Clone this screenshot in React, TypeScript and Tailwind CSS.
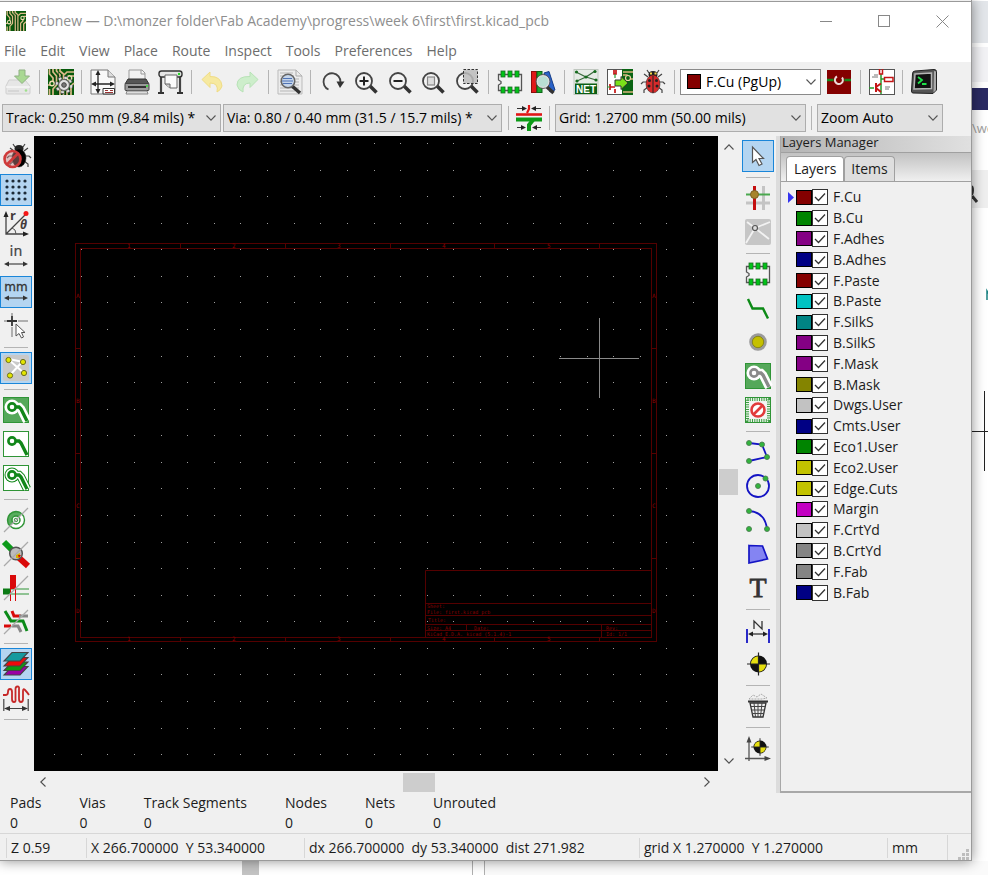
import type { ReactNode } from "react";

type Tool = { label: string; icon: ReactNode; active?: boolean } | null;

function Icon({ children }: { children: ReactNode }) {
  return (
    <svg
      width="26"
      height="26"
      viewBox="0 0 26 26"
      fill="none"
      className="shrink-0 overflow-visible"
      aria-hidden="true"
    >
      {children}
    </svg>
  );
}

function Chevron({ className = "" }: { className?: string }) {
  return (
    <svg
      width="10"
      height="10"
      viewBox="0 0 10 10"
      fill="none"
      stroke="currentColor"
      className={className}
      aria-hidden="true"
    >
      <path d="M0.5 2.5 5 7.2 9.5 2.5" strokeWidth="1.1" />
    </svg>
  );
}

/* ---------- shared drawings ---------- */

function PcbTracks() {
  return (
    <>
      <rect width="26" height="26" fill="#075a0b" />
      <g stroke="#dcb98a" strokeWidth="1.7">
        <path d="M1.5 0V5L5 9V13M5 0V3L8.500 7V16L5 20V26M8.500 0V2L12 6V26M12 0V2L15.500 5V26" />
        <path d="M0 16H2M1.500 26V20M26 3H19L16 6M19 26V16L22 13V10M23 26V17L26 14M26 7H23" />
      </g>
      <g stroke="#0c2f0d" strokeWidth="0.700">
        <path d="M3.300 0V4L6.700 8V15M10.300 3 10.300 26M13.700 5V26M17.300 26V8M21 26V16" />
      </g>
      <circle cx="4" cy="14.500" r="2.200" fill="#075a0b" stroke="#f0dcb4" strokeWidth="1.400" />
      <circle cx="21.500" cy="9" r="2.200" fill="#075a0b" stroke="#f0dcb4" strokeWidth="1.400" />
    </>
  );
}

function Lens({ children }: { children?: ReactNode }) {
  return (
    <>
      <path d="M17 17 23.5 23.5" stroke="#333" strokeWidth="3.6" />
      <circle cx="11" cy="12" r="8" fill="#f4f4f4" stroke="#444" strokeWidth="1.8" />
      {children}
    </>
  );
}

function Footprint() {
  return (
    <>
      <path
        d="M1.5 5.5H24.500V21.500H1.500V16L4 14.500V12.500L1.500 11Z"
        fill="#f4f4f4"
        stroke="#555"
        strokeWidth="1.3"
      />
      <g fill="#00c418" stroke="#1b6b22" strokeWidth="0.8">
        <rect x="4" y="2" width="4" height="6" />
        <rect x="11" y="2" width="4" height="6" />
        <rect x="18" y="2" width="4" height="6" />
        <rect x="4" y="18" width="4" height="6" />
        <rect x="11" y="18" width="4" height="6" />
        <rect x="18" y="18" width="4" height="6" />
      </g>
    </>
  );
}

function Zone({ filled, halo, track }: { filled: boolean; halo: boolean; track: string }) {
  const path = "M11 10H16L18 12 24 24";
  return (
    <>
      <rect
        x="0.5"
        y="0.5"
        width="25"
        height="25"
        fill={filled ? "#55a85a" : "#fff"}
        stroke="#2f9436"
      />
      {halo && (
        <>
          <path d={path} stroke={filled ? "#fff" : track} strokeWidth="8.500" />
          <circle cx="9" cy="10" r="7.500" fill={filled ? "#fff" : track} />
          <path d={path} stroke="#fff" strokeWidth="6.500" />
          <circle cx="9" cy="10" r="6.500" fill="#fff" />
        </>
      )}
      <path d={path} stroke={track} strokeWidth="3.400" />
      <circle cx="9" cy="10" r="3.600" fill="#fff" stroke={track} strokeWidth="2.600" />
    </>
  );
}

function Slash() {
  return <path d="M1 25 25 1" stroke="#aaa" strokeWidth="1.3" />;
}

function Target({ cx, cy, r }: { cx: number; cy: number; r: number }) {
  return (
    <g transform={`translate(${cx} ${cy}) scale(${r})`}>
      <circle r="1" fill="#111" />
      <path d="M0 0V-.9A.9 .9 0 0 0-.9 0ZM0 0V.9A.9 .9 0 0 0 .9 0Z" fill="#e6df10" />
      <path d="M-1.350 0H1.350M0-1.350V1.350" stroke="#222" strokeWidth="0.140" />
    </g>
  );
}

function DoubleArrow({ y }: { y: number }) {
  return (
    <>
      <path d={`M3 ${y}H23`} stroke="#444" strokeWidth="1.2" />
      <path
        d={`M1 ${y}L6 ${y - 2.5}V${y + 2.5}ZM25 ${y}L20 ${y - 2.5}V${y + 2.5}Z`}
        fill="#333"
      />
    </>
  );
}

function NodeDot({ x, y }: { x: number; y: number }) {
  return <circle cx={x} cy={y} r="2.500" fill="#31b53c" stroke="#4d7d52" strokeWidth="0.900" />;
}

function Bug({ body, x = 13 }: { body: string; x?: number }) {
  return (
    <g transform={`translate(${x - 13} 0)`}>
      <path
        d="M8 8 4 5M18 8 22 5M7 13H3L1 15M19 13H23L25 15M8 18 4 21V24M18 18 22 21V24M9 4 7 1M17 4 19 1"
        stroke="#444"
        strokeWidth="1.200"
      />
      <ellipse cx="13" cy="5.500" rx="4.500" ry="3.500" fill="#222" />
      <ellipse cx="13" cy="15" rx="7" ry="9" fill={body} stroke="#222" strokeWidth="0.500" />
    </g>
  );
}

/* ---------- toolbars ---------- */

const mainTools: Tool[] = [
  {
    label: "Save board",
    icon: (
      <Icon>
        <path d="M4 11H20L25 17V24Q25 25 24 25H2Q1 25 1 24V17Z" fill="#e6e6e6" stroke="#cfcfcf" />
        <path d="M1 18H25" stroke="#fff" />
        <path d="M3 22H14" stroke="#ccc" strokeWidth="1.200" />
        <circle cx="21" cy="21.500" r="1.300" fill="#9fe08c" />
        <path d="M14 1H20V7H24.500L17 14.500 9.500 7H14Z" fill="#a9d893" stroke="#8fb183" />
      </Icon>
    ),
  },
  null,
  {
    label: "Board setup",
    icon: (
      <Icon>
        <PcbTracks />
        <circle cx="16" cy="16" r="7.500" stroke="#555" strokeWidth="3.500" strokeDasharray="2.950 2.950" />
        <circle cx="16" cy="16" r="7.300" stroke="#ddd" strokeWidth="2" strokeDasharray="2.870 2.870" />
        <circle cx="16" cy="16" r="5.500" fill="#e2e2e2" stroke="#666" strokeWidth="1.200" />
        <circle cx="16" cy="16" r="2.300" fill="#777" stroke="#444" />
      </Icon>
    ),
  },
  null,
  {
    label: "Page settings",
    icon: (
      <Icon>
        <path d="M1 1H18L25 8V25H1Z" fill="#f8f8f8" stroke="#777" />
        <path d="M18 1V8H25" fill="#ddd" stroke="#777" />
        <path d="M8 3V23M3 15H23" stroke="#222" strokeWidth="1.300" />
        <path d="M8 1 5.500 6H10.500ZM8 25 5.500 20H10.500ZM1 15 6 12.500V17.500ZM25 15 20 12.500V17.500Z" fill="#222" />
        <path d="M13 19.500H24.500V25H13Z" fill="#fff" stroke="#333" />
        <path d="M15 21.500H18M20 21.500H23M15 23.500H23" stroke="#933" />
      </Icon>
    ),
  },
  {
    label: "Print board",
    icon: (
      <Icon>
        <path d="M6 1H18L21 4V13H5V1Z" fill="#f2f2f2" stroke="#999" />
        <path d="M17 1V5H21" stroke="#999" />
        <path d="M4 10 1 15H25L22 10Z" fill="#555" stroke="#333" />
        <rect x="1" y="14.500" width="24" height="7" rx="1" fill="#999" stroke="#444" />
        <rect x="4" y="17" width="18" height="2" fill="#333" />
        <circle cx="23" cy="17" r="1" fill="#35e835" />
        <path d="M3 22H23L24 25H2Z" fill="#ddd" stroke="#888" />
      </Icon>
    ),
  },
  {
    label: "Plot",
    icon: (
      <Icon>
        <path d="M3 8V23M22 8V23" stroke="#444" strokeWidth="2.200" />
        <path d="M0 24H6M19 24H25" stroke="#333" strokeWidth="2" />
        <rect x="1" y="2" width="23" height="6" rx="2.500" fill="#e6e6e6" stroke="#333" strokeWidth="1.400" />
        <circle cx="21" cy="5" r="1.200" fill="#25d425" />
        <path d="M7 6H19V19H12L7 15Z" fill="#fafafa" stroke="#666" />
        <path d="M7 15H12V19" fill="#ccc" stroke="#666" />
      </Icon>
    ),
  },
  null,
  {
    label: "Undo",
    icon: (
      <Icon>
        <path
          d="M2 10.500 10 3V7.500Q21 7 22 17Q21 21 17 23Q19 14 10 14V18.500Z"
          fill="#f6e9a0"
          stroke="#f0dc84"
          strokeLinejoin="round"
        />
      </Icon>
    ),
  },
  {
    label: "Redo",
    icon: (
      <Icon>
        <path
          d="M24 10.500 16 3V7.500Q3 7 3 16Q4 21 9 23Q8 14 16 14V18.500Z"
          fill="#cdeecb"
          stroke="#b7e2b6"
          strokeLinejoin="round"
        />
      </Icon>
    ),
  },
  null,
  {
    label: "Find",
    icon: (
      <Icon>
        <path d="M1 1H19L25 7V25H1Z" fill="#ececec" stroke="#bbb" />
        <path d="M19 1V7H25" stroke="#aaa" />
        <path d="M3 4H16M3 7H17M3 10H22M3 13H22M3 16H22M3 19H22M3 22H18" stroke="#b5b5b5" />
        <path d="M15 17 23 24" stroke="#333" strokeWidth="3.500" />
        <circle cx="11" cy="12" r="6.800" fill="#c5d5ea" stroke="#666" strokeWidth="1.500" />
        <path d="M6 9.500H15M5 12H16M6 14.500H15" stroke="#4f73b5" strokeWidth="1.100" />
      </Icon>
    ),
  },
  null,
  {
    label: "Refresh",
    icon: (
      <Icon>
        <path d="M9.500 20.500A8.500 8.500 0 1 1 21.500 13" stroke="#444" strokeWidth="1.800" />
        <path d="M17.500 12.500H25.500L21 19Z" fill="#333" />
      </Icon>
    ),
  },
  {
    label: "Zoom in",
    icon: (
      <Icon>
        <Lens>
          <path d="M11 7.500V16.500M6.500 12H15.500" stroke="#222" strokeWidth="2" />
        </Lens>
      </Icon>
    ),
  },
  {
    label: "Zoom out",
    icon: (
      <Icon>
        <Lens>
          <path d="M6.500 12H15.500" stroke="#222" strokeWidth="2" />
        </Lens>
      </Icon>
    ),
  },
  {
    label: "Zoom to fit",
    icon: (
      <Icon>
        <Lens>
          <rect x="7.500" y="8" width="7" height="8" fill="#ddd" stroke="#888" strokeWidth="1.200" />
        </Lens>
      </Icon>
    ),
  },
  {
    label: "Zoom to selection",
    icon: (
      <Icon>
        <Lens />
        <rect
          x="9.500"
          y="0.500"
          width="14"
          height="14"
          fill="#bbb"
          fillOpacity="0.850"
          stroke="#333"
          strokeDasharray="2.500 1.500"
        />
      </Icon>
    ),
  },
  null,
  {
    label: "Footprint editor",
    icon: (
      <Icon>
        <Footprint />
      </Icon>
    ),
  },
  {
    label: "Footprint viewer",
    icon: (
      <Icon>
        <rect x="1.500" y="2.500" width="5" height="21" fill="#e01818" stroke="#8d0c0c" />
        <rect x="7" y="2.500" width="5" height="21" fill="#19a82b" stroke="#0d6618" />
        <path d="M14 4 19 2.500 25 21 20 23Z" fill="#2a62c9" stroke="#153d88" />
        <path d="M17 18 23.500 24" stroke="#333" strokeWidth="3.500" />
        <circle cx="13" cy="12.500" r="6" fill="#b9dfd4" stroke="#ddd" strokeWidth="1.500" />
        <circle cx="13" cy="12.500" r="7" stroke="#555" strokeWidth="0.900" />
      </Icon>
    ),
  },
  null,
  {
    label: "Load netlist",
    icon: (
      <Icon>
        <rect x="1" y="0.500" width="24" height="25" fill="#e6ebe6" stroke="#bfc7bf" />
        <path d="M3 3 13 8 22 2M13 8 4 12M13 8 23 11" stroke="#3b6b3e" strokeWidth="1.200" />
        <g fill="#146b1c">
          <circle cx="3.500" cy="3" r="1.600" />
          <circle cx="22" cy="2.500" r="1.600" />
          <circle cx="13" cy="8" r="1.600" />
          <circle cx="4" cy="12" r="1.600" />
          <circle cx="23" cy="11" r="1.600" />
        </g>
        <rect x="2" y="14.500" width="22" height="10.500" fill="#0b5f14" />
        <text
          x="13"
          y="23.500"
          textAnchor="middle"
          fontSize="10"
          fontWeight="bold"
          fill="#fff"
          fontFamily="Liberation Sans, sans-serif"
        >
          NET
        </text>
      </Icon>
    ),
  },
  {
    label: "Update board from schematic",
    icon: (
      <Icon>
        <rect x="0.500" y="0.500" width="15" height="25" fill="#fff" stroke="#555" />
        <rect x="15" y="0" width="11" height="26" fill="#0a6413" />
        <path d="M16 3H26M16 6H20L23 10H26M16 23H26" stroke="#d8b27c" strokeWidth="1.400" />
        <circle cx="21" cy="9" r="2.500" fill="#0a6413" stroke="#ecd3a7" strokeWidth="1.200" />
        <path d="M7 1V5H9V1M3 15V21M3 18H8M8 20V24" stroke="#c41616" strokeWidth="1.700" />
        <path d="M8 5V9M0 18H3" stroke="#2b9a33" strokeWidth="1.200" />
        <path d="M8 11H14V7.500L21 14 14 20.500V17H8Z" fill="#7be019" stroke="#333" />
      </Icon>
    ),
  },
  {
    label: "Design rules check",
    icon: (
      <Icon>
        <Bug body="#d62a2a" />
        <path d="M13 7V24" stroke="#222" />
        <g fill="#222">
          <circle cx="9.500" cy="11.500" r="1.500" />
          <circle cx="16.500" cy="11.500" r="1.500" />
          <circle cx="9" cy="17" r="1.500" />
          <circle cx="17" cy="17" r="1.500" />
        </g>
        <path d="M10 4.500H12M14.500 4.500H16.500" stroke="#f4d648" strokeWidth="1.800" />
      </Icon>
    ),
  },
  null,
];

const sideTools: Tool[] = [
  {
    label: "Layer pair",
    icon: (
      <Icon>
        <rect x="1" y="1" width="24" height="24" fill="#840000" />
        <path d="M1 11H25" stroke="#158a1d" strokeWidth="2.500" />
        <circle cx="13" cy="11" r="5.500" fill="#840000" />
        <path d="M11 7.500A4 4 0 1 0 16 8.500" stroke="#eed8d8" strokeWidth="2" />
      </Icon>
    ),
  },
  null,
  {
    label: "Open schematic",
    icon: (
      <Icon>
        <rect x="0.500" y="0.500" width="25" height="25" fill="#fff" stroke="#555" />
        <path d="M12 5V25M0 19H5M12 10H15" stroke="#249a2b" strokeWidth="1.500" />
        <path d="M10.500 0V5H13.500V0M15.500 8.500H24V12.500H15.500Z" stroke="#c41616" strokeWidth="1.500" />
        <path d="M7 14V23M7 18 12 14.500M7 19 12 23" stroke="#c41616" strokeWidth="2" />
        <path d="M3 8H9M5 6H9M16 18H21M16 20H20" stroke="#777" />
      </Icon>
    ),
  },
  null,
  {
    label: "Scripting console",
    icon: (
      <Icon>
        <path d="M4 2 23 0.500Q25.500 0.500 25.500 2.500V21L22 24.500 2 24Q0.500 24 0.500 22L1.500 5Q1.500 2 4 2Z" fill="#555" stroke="#222" />
        <path d="M23 2 25 2.500V21L22.500 23.500Z" fill="#aaa" />
        <path d="M4 5 20.500 4V19.500L3 20Z" fill="#111" stroke="#b5b5b5" strokeWidth="1.500" />
        <path d="M7 8 11 11 7 14.500M11 15H15.500" stroke="#20e04a" strokeWidth="1.800" />
      </Icon>
    ),
  },
];

const leftTools: Tool[] = [
  {
    label: "Disable design rule checking",
    icon: (
      <Icon>
        <Bug body="#000" x={16} />
        <circle cx="9.500" cy="16" r="8" fill="#c88" fillOpacity="0.450" stroke="#cf3a3a" strokeWidth="2.600" />
        <path d="M4 21.500 15 10.500" stroke="#cf3a3a" strokeWidth="2.600" />
      </Icon>
    ),
  },
  {
    label: "Show grid",
    active: true,
    icon: (
      <Icon>
        {[4, 10, 16, 22].map((y) =>
          [4, 10, 16, 22].map((x) => (
            <circle key={`${x}-${y}`} cx={x} cy={y} r="1.600" fill="#1d2b38" />
          )),
        )}
      </Icon>
    ),
  },
  {
    label: "Polar coordinates",
    icon: (
      <Icon>
        <path d="M3 3V23H23M3 23 23 3" stroke="#444" strokeWidth="1.300" />
        <path d="M3 0 0.500 6H5.500ZM26 23 20 20.500V25.500ZM" fill="#222" />
        <path d="M9 17Q13 18 13 23" stroke="#555" />
        <circle cx="23" cy="2.500" r="2.500" fill="#f41818" />
        <text x="7" y="9" fontSize="13" fontWeight="bold" fill="#443b3b" fontFamily="Open Sans, sans-serif">
          r
        </text>
        <text x="17" y="18" fontSize="12" fontStyle="italic" fontWeight="bold" fill="#443b3b" fontFamily="Open Sans, sans-serif">
          θ
        </text>
      </Icon>
    ),
  },
  {
    label: "Inches",
    icon: (
      <Icon>
        <text x="13" y="11" textAnchor="middle" fontSize="14" fill="#444" stroke="#444" strokeWidth="0.200" fontFamily="DejaVu Sans, sans-serif">
          in
        </text>
        <DoubleArrow y={19} />
      </Icon>
    ),
  },
  {
    label: "Millimeters",
    active: true,
    icon: (
      <Icon>
        <text x="13" y="12" textAnchor="middle" fontSize="12" fill="#333" stroke="#333" strokeWidth="0.300" fontFamily="DejaVu Sans, sans-serif">
          mm
        </text>
        <DoubleArrow y={19} />
      </Icon>
    ),
  },
  {
    label: "Full window cursor",
    icon: (
      <Icon>
        <path d="M9 0V3M9 14V24M1 8H4M15 8H25" stroke="#999" strokeWidth="1.500" />
        <path d="M9 3V13M4 8H14" stroke="#333" strokeWidth="1.800" />
        <path d="M13 11V23L16 20.500 18.500 25 20.500 24 18.500 19.500H22Z" fill="#fff" stroke="#555" />
      </Icon>
    ),
  },
  null,
  {
    label: "Show ratsnest",
    active: true,
    icon: (
      <Icon>
        <rect width="26" height="26" rx="2" fill="#c9c9c9" />
        <path d="M6 4 20 7M6 5 21 18M20 6 7 20" stroke="#fff" strokeWidth="2" />
        <g fill="#e3e600" stroke="#6d6e1d">
          <circle cx="5.500" cy="5" r="2.600" />
          <circle cx="20" cy="7" r="2.600" />
          <circle cx="21" cy="18" r="2.600" />
          <circle cx="7" cy="20.500" r="2.600" />
        </g>
      </Icon>
    ),
  },
  null,
  {
    label: "Show filled zones",
    icon: (
      <Icon>
        <Zone filled halo track="#12871a" />
      </Icon>
    ),
  },
  {
    label: "Hide zones",
    icon: (
      <Icon>
        <Zone filled={false} halo={false} track="#12871a" />
      </Icon>
    ),
  },
  {
    label: "Show zone outlines",
    icon: (
      <Icon>
        <Zone filled={false} halo track="#12871a" />
      </Icon>
    ),
  },
  null,
  {
    label: "Sketch pads",
    icon: (
      <Icon>
        <circle cx="13" cy="13" r="8.500" fill="#fff" stroke="#2f9436" strokeWidth="1.400" />
        <path d="M7 19A8.500 8.500 0 0 1 19 7Z" fill="#58ad5e" stroke="#2f9436" />
        <circle cx="13" cy="13" r="4" fill="#fff" stroke="#2f9436" strokeWidth="1.500" />
        <circle cx="13" cy="13" r="1.800" stroke="#2f9436" />
        <Slash />
      </Icon>
    ),
  },
  {
    label: "Sketch vias",
    icon: (
      <Icon>
        <path d="M1 1 10 10" stroke="#0c9a1a" strokeWidth="6" />
        <path d="M14 15 25 25" stroke="#d90909" strokeWidth="6" />
        <circle cx="13" cy="12.500" r="6.300" fill="#bdbdbd" stroke="#555" strokeWidth="1.500" />
        <path d="M13 14 17 12V17H13Z" fill="#d8b000" />
        <path d="M15 14H18L16 17Z" fill="#d90909" />
        <Slash />
      </Icon>
    ),
  },
  {
    label: "Sketch tracks",
    icon: (
      <Icon>
        <path d="M0 16.500H8" stroke="#0b7a14" strokeWidth="6" />
        <path d="M8 14H26M8 19H26" stroke="#2f9436" />
        <path d="M10 0V14" stroke="#d90909" strokeWidth="6" />
        <path d="M7.500 14V26M12.500 14V26" stroke="#d90909" />
        <Slash />
      </Icon>
    ),
  },
  {
    label: "High contrast mode",
    icon: (
      <Icon>
        <path d="M9 2 11 7H18M1 17H8" stroke="#d90909" strokeWidth="3" />
        <path d="M16 7H25M9 17H15L18 23" stroke="#888" strokeWidth="3" />
        <path d="M2 2 8 12H20L24 22" stroke="#0b8a18" strokeWidth="3" />
        <Slash />
      </Icon>
    ),
  },
  null,
  {
    label: "Show layers manager",
    active: true,
    icon: (
      <Icon>
        <g stroke="#444" strokeWidth="1.100">
          <path d="M9 15.500H25L17 24H1Z" fill="#9a00a5" />
          <path d="M9 11H25L17 19.500H1Z" fill="#109a10" />
          <path d="M9 6.500H25L17 15H1Z" fill="#f00a0a" />
          <path d="M9 1.500H25L17 10H1Z" fill="#169a9e" />
        </g>
      </Icon>
    ),
  },
  {
    label: "Microwave toolbar",
    icon: (
      <Icon>
        <path
          d="M0 10H3Q5 10 5 7T7 4T9 7V14Q9 17 11 17T12.500 14V4Q12.500 1.500 14.500 1.500T16 4V14Q16 17 18 17T20 14V6Q20 3 22 5T26 10"
          stroke="#c62828"
          strokeWidth="1.800"
        />
        <path d="M0.800 14V26M25.200 14V26M3 23.500H23" stroke="#444" strokeWidth="1.200" />
        <path d="M1 23.500 7 21V26ZM25 23.500 19 21V26Z" fill="#333" />
      </Icon>
    ),
  },
  null,
];

const rightTools: Tool[] = [
  {
    label: "Select item",
    active: true,
    icon: (
      <Icon>
        <path d="M7.500 4V19.500L11 16.500 14 22.500 17 21 14 15.500H18.500Z" fill="#fff" stroke="#555" strokeWidth="1.200" />
      </Icon>
    ),
  },
  null,
  {
    label: "Highlight net",
    icon: (
      <Icon>
        <path d="M18.500 1V25M1 18H25" stroke="#c4c4c4" strokeWidth="3" />
        <path d="M9.500 1V25" stroke="#c41010" strokeWidth="3" />
        <path d="M1 9.500H25" stroke="#4aa84e" strokeWidth="2" />
        <circle cx="9.500" cy="9.500" r="4" fill="#a8842a" stroke="#7d6224" />
      </Icon>
    ),
  },
  {
    label: "Local ratsnest",
    icon: (
      <Icon>
        <rect width="26" height="26" rx="2" fill="#c6c6c6" />
        <path d="M10 9 25 3M10 9 2 3M10 9 1 24M10 9 24 20" stroke="#f2f2f2" strokeWidth="1.800" />
        <circle cx="10" cy="9" r="2.500" fill="#ddd" stroke="#555" strokeWidth="1.200" />
      </Icon>
    ),
  },
  null,
  {
    label: "Add footprint",
    icon: (
      <Icon>
        <Footprint />
      </Icon>
    ),
  },
  {
    label: "Route tracks",
    icon: (
      <Icon>
        <path d="M3 4 7.500 13.500H18L23 23.500" stroke="#0c8a16" strokeWidth="2.400" />
      </Icon>
    ),
  },
  {
    label: "Add via",
    icon: (
      <Icon>
        <circle cx="13" cy="13" r="7.300" fill="#c5c000" stroke="#9a9a9a" strokeWidth="3" />
        <circle cx="13" cy="13" r="5.700" stroke="#88861b" />
      </Icon>
    ),
  },
  {
    label: "Add filled zone",
    icon: (
      <Icon>
        <Zone filled halo track="#8a8a8a" />
      </Icon>
    ),
  },
  {
    label: "Add keepout area",
    icon: (
      <Icon>
        <rect x="0.500" y="0.500" width="25" height="25" fill="#eaf4ea" stroke="#2f9436" />
        <path d="M2.500 2.500H23.500V23.500H2.500Z" stroke="#3c9c43" strokeWidth="3" strokeDasharray="1 1.300" />
        <rect x="4.500" y="4.500" width="17" height="17" fill="#f5f5f5" />
        <circle cx="13" cy="13" r="6.500" fill="#fff" stroke="#e13b3b" strokeWidth="2.600" />
        <path d="M17.500 8.500 8.500 17.500" stroke="#e13b3b" strokeWidth="2.600" />
      </Icon>
    ),
  },
  null,
  {
    label: "Add line",
    icon: (
      <Icon>
        <path d="M4 4 17 5.500 22 18 4 22" stroke="#1414c4" strokeWidth="1.800" />
        <NodeDot x={4} y={4} />
        <NodeDot x={17} y={5.5} />
        <NodeDot x={22} y={18} />
        <NodeDot x={4} y={22} />
      </Icon>
    ),
  },
  {
    label: "Add circle",
    icon: (
      <Icon>
        <circle cx="13" cy="13" r="11" stroke="#1414c4" strokeWidth="1.800" />
        <NodeDot x={13} y={13} />
        <NodeDot x={20.5} y={5.5} />
      </Icon>
    ),
  },
  {
    label: "Add arc",
    icon: (
      <Icon>
        <path d="M4 4Q20 5 22 22" stroke="#1414c4" strokeWidth="1.800" />
        <NodeDot x={4} y={4} />
        <NodeDot x={4} y={22} />
        <NodeDot x={22} y={22} />
      </Icon>
    ),
  },
  {
    label: "Add polygon",
    icon: (
      <Icon>
        <path d="M4 4.500 17.500 5 22.500 18 4 22Z" fill="#8484f2" stroke="#1414c4" strokeWidth="1.700" />
      </Icon>
    ),
  },
  {
    label: "Add text",
    icon: (
      <Icon>
        <text x="13" y="22" textAnchor="middle" fontSize="28" fill="#333" stroke="#333" strokeWidth="0.800" fontFamily="Liberation Serif, serif">
          T
        </text>
      </Icon>
    ),
  },
  null,
  {
    label: "Add dimension",
    icon: (
      <Icon>
        <path d="M2 12V26M24 12V26" stroke="#1414c4" strokeWidth="1.800" />
        <path d="M5 17H21" stroke="#222" strokeWidth="1.200" />
        <path d="M3 17 8 14.500V19.500ZM23 17 18 14.500V19.500Z" fill="#222" />
        <path d="M9 12V4L17 12V4" stroke="#333" strokeWidth="1.300" />
      </Icon>
    ),
  },
  {
    label: "Add layer alignment target",
    icon: (
      <Icon>
        <Target cx={13.5} cy={13} r={8.5} />
      </Icon>
    ),
  },
  null,
  {
    label: "Delete",
    icon: (
      <Icon>
        <path d="M4 6 8 2 12 4 16 1 22 5 17 6Z" stroke="#aaa" strokeDasharray="2 1" />
        <path d="M3 8.500H23" stroke="#333" strokeWidth="2" />
        <path d="M5 10H21L18 24H8Z" fill="#eee" stroke="#333" strokeWidth="1.300" />
        <path d="M9 10 10.500 24M13 10V24M17 10 15.500 24M5.500 13.500H20.500M6.500 17H19.500M7 20.500H19" stroke="#444" />
      </Icon>
    ),
  },
  null,
  {
    label: "Set drill and place origin",
    icon: (
      <Icon>
        <path d="M4 4V26M0 23.500H22" stroke="#555" strokeWidth="1.300" />
        <path d="M4 1 1.500 7.500H6.500ZM26 23.500 19.500 21V26Z" fill="#444" />
        <Target cx={15} cy={12} r={6.5} />
      </Icon>
    ),
  },
];

function HorizontalTools({ tools }: { tools: Tool[] }) {
  return (
    <>
      {tools.map((tool, i) =>
        tool ? (
          <button
            key={i}
            type="button"
            aria-label={tool.label}
            className="flex h-[34px] w-[34px] min-w-0 items-center justify-center"
          >
            {tool.icon}
          </button>
        ) : (
          <span key={i} className="flex w-[9px] shrink-0 justify-center">
            <span className="h-6 w-px bg-[#b4b4b4]" />
          </span>
        ),
      )}
    </>
  );
}

function VerticalTools({ tools, className }: { tools: Tool[]; className: string }) {
  return (
    <div className={`flex shrink-0 flex-col pt-[3px] ${className}`}>
      {tools.map((tool, i) =>
        tool ? (
          <div key={i} className="flex h-[34px] shrink-0 items-center justify-center">
            <button
              type="button"
              aria-label={tool.label}
              aria-pressed={!!tool.active}
              className={`flex h-8 w-8 shrink-0 items-center justify-center border ${
                tool.active ? "border-[#1a86d9] bg-[#b4d5f1]" : "border-transparent"
              }`}
            >
              {tool.icon}
            </button>
          </div>
        ) : (
          <div key={i} className="flex h-2 shrink-0 items-center justify-center">
            <span className="h-px w-6 bg-[#b4b4b4]" />
          </div>
        ),
      )}
    </div>
  );
}

function Combo({
  label,
  value,
  className,
  children,
}: {
  label: string;
  value: string;
  className: string;
  children?: ReactNode;
}) {
  return (
    <div className={`relative shrink-0 ${className}`}>
      <select
        aria-label={label}
        className={`h-full w-full appearance-none border pr-5 text-black outline-none ${
          children ? "border-[#8a8a8a] bg-white pl-[25px]" : "border-[#adadad] bg-[#e1e1e1] pl-[3px]"
        }`}
      >
        <option>{value}</option>
      </select>
      {children}
      <Chevron className="pointer-events-none absolute top-1/2 right-[5px] -translate-y-1/2 text-[#555]" />
    </div>
  );
}

/* ---------- drawing area ---------- */

const gridX = Array.from({ length: 25 }, (_, i) => Math.round(20 + i * 26.63));
const gridY = Array.from({ length: 24 }, (_, i) => Math.round(7 + i * 26.57));

function Board() {
  const columns = ["1", "2", "3", "4", "5"];
  const rows = ["A", "B", "C", "D"];
  return (
    <svg
      className="block min-h-[634px] w-full flex-1 bg-black"
      role="img"
      aria-label="Board drawing sheet"
    >
      <g fill="#a0a0a0">
        {gridY.map((y) =>
          gridX.map((x) => <rect key={`${x}-${y}`} x={x} y={y} width="1" height="1" />),
        )}
      </g>
      <g stroke="#540000" fill="none">
        <rect x="41.500" y="107.500" width="581" height="398" />
        <rect x="46.500" y="112.500" width="571" height="389" />
        {[146.5, 251.5, 356.5, 460.5, 565.5].map((x) => (
          <path key={x} d={`M${x} 107V112M${x} 501V506`} />
        ))}
        {[212.5, 317.5, 422.5].map((y) => (
          <path key={y} d={`M41 ${y}H46M617 ${y}H622`} />
        ))}
        <path d="M391.500 501V434.500H617M391 467.500H617M391 479.500H617M391 488.500H617M391 494.500H617M432.500 488V494M567.500 488V501" />
      </g>
      <g fill="#8a0000" fontSize="6" fontFamily="DejaVu Sans Mono, monospace">
        {columns.map((c, i) => (
          <g key={c}>
            <text x={93 + i * 105} y="112">{c}</text>
            <text x={93 + i * 105} y="505">{c}</text>
          </g>
        ))}
        {rows.map((r, i) => (
          <g key={r}>
            <text x="42" y={162 + i * 105}>{r}</text>
            <text x="618" y={162 + i * 105}>{r}</text>
          </g>
        ))}
        <g fontSize="5">
          <text x="393" y="472">Sheet:</text>
          <text x="393" y="478">File: first.kicad_pcb</text>
          <text x="394" y="486">Title:</text>
          <text x="393" y="494">Size: A4</text>
          <text x="440" y="494">Date:</text>
          <text x="572" y="494">Rev:</text>
          <text x="393" y="500">KiCad E.D.A. kicad (5.1.4)-1</text>
          <text x="572" y="500">Id: 1/1</text>
        </g>
      </g>
      <path d="M565.500 182V262M525 222.500H605" stroke="#8a8a8a" />
    </svg>
  );
}

function Canvas() {
  return (
    <div className="flex min-w-0 flex-1 flex-col">
      <div className="flex flex-1">
        <div className="flex min-w-0 flex-1 flex-col">
          <Board />
        </div>
        <div className="flex w-[22px] shrink-0 flex-col items-center pr-px text-[#505050]">
          <button type="button" aria-label="Scroll up" className="py-[6px]">
            <Chevron className="rotate-180 stroke-2" />
          </button>
          <span className="flex-[310]" />
          <span className="h-[26px] w-[19px] bg-[#cdcdcd]" />
          <span className="flex-[256]" />
          <button type="button" aria-label="Scroll down" className="py-[5px]">
            <Chevron className="stroke-2" />
          </button>
        </div>
      </div>
      <div className="flex h-[22px] shrink-0 items-center pr-[22px] text-[#505050]">
        <button type="button" aria-label="Scroll left" className="px-1">
          <Chevron className="rotate-90 stroke-2" />
        </button>
        <span className="flex-[353]" />
        <span className="h-[19px] w-8 bg-[#cdcdcd]" />
        <span className="flex-[262]" />
        <button type="button" aria-label="Scroll right" className="px-[6px]">
          <Chevron className="-rotate-90 stroke-2" />
        </button>
      </div>
    </div>
  );
}

/* ---------- layers manager ---------- */

const layers: [string, string][] = [
  ["F.Cu", "#840000"],
  ["B.Cu", "#008400"],
  ["F.Adhes", "#840084"],
  ["B.Adhes", "#000084"],
  ["F.Paste", "#840000"],
  ["B.Paste", "#00c2c2"],
  ["F.SilkS", "#008484"],
  ["B.SilkS", "#840084"],
  ["F.Mask", "#840084"],
  ["B.Mask", "#848400"],
  ["Dwgs.User", "#c2c2c2"],
  ["Cmts.User", "#000084"],
  ["Eco1.User", "#008400"],
  ["Eco2.User", "#c2c200"],
  ["Edge.Cuts", "#c2c200"],
  ["Margin", "#c200c2"],
  ["F.CrtYd", "#c2c2c2"],
  ["B.CrtYd", "#848484"],
  ["F.Fab", "#848484"],
  ["B.Fab", "#000084"],
];

function LayersManager() {
  return (
    <aside className="flex w-[191px] shrink-0 flex-col border-b-2 border-l border-[#a8a8a8]">
      <h2 className="h-4 bg-gradient-to-r from-[#b4b4b4] to-[#e0e0e0] pl-px text-[13px] leading-[13px]">
        Layers Manager
      </h2>
      <div
        role="tablist"
        className="flex h-[30px] items-end border-t border-b border-[#a0a0a0] bg-gradient-to-b from-[#c2c2c2] to-[#f0f0f0] pl-[5px]"
      >
        <button
          type="button"
          role="tab"
          aria-selected="true"
          className="h-[25px] rounded-t-sm border border-b-0 border-[#a0a0a0] bg-white px-[7px]"
        >
          Layers
        </button>
        <button
          type="button"
          role="tab"
          aria-selected="false"
          className="h-[25px] rounded-t-sm border border-b-0 border-[#a0a0a0] bg-[#dedede] px-[6px]"
        >
          Items
        </button>
      </div>
      <ul className="mt-[5px] grid h-[416px] auto-rows-fr">
        {layers.map(([name, color], i) => (
          <li key={name} className="flex items-center pl-[7px]">
            <span className="w-2">
              {i === 0 && (
                <svg width="6" height="11" viewBox="0 0 6 11" aria-hidden="true">
                  <path d="M0 0 6 5.500 0 11Z" fill="#3434f0" />
                </svg>
              )}
            </span>
            <span className="h-[15px] w-4 border border-black" style={{ background: color }} />
            <label className="flex items-center gap-[5px]">
              <span className="relative flex h-4 w-4">
                <input
                  type="checkbox"
                  defaultChecked
                  className="peer h-4 w-4 appearance-none border border-[#333] bg-white"
                />
                <svg
                  viewBox="0 0 16 16"
                  fill="none"
                  className="pointer-events-none absolute inset-0 hidden peer-checked:block"
                  aria-hidden="true"
                >
                  <path d="M3 8 6.500 11.500 13 4.500" stroke="#333" strokeWidth="1.300" />
                </svg>
              </span>
              {name}
            </label>
          </li>
        ))}
      </ul>
    </aside>
  );
}

/* ---------- window ---------- */

const menus = ["File", "Edit", "View", "Place", "Route", "Inspect", "Tools", "Preferences", "Help"];
const stats = ["Pads", "Vias", "Track Segments", "Nodes", "Nets", "Unrouted"];

function TitleBar() {
  return (
    <header className="bg-white">
      <div className="flex h-[38px] items-center pl-[6px] text-[#8e8e8e]">
        <svg width="20" height="20" viewBox="0 0 26 26" fill="none" aria-hidden="true">
          <PcbTracks />
        </svg>
        <h1 className="ml-[5px] flex-1 whitespace-nowrap">
          Pcbnew — D:\monzer folder\Fab Academy\progress\week 6\first\first.kicad_pcb
        </h1>
        <button type="button" aria-label="Minimize" className="flex w-[58px] justify-center">
          <span className="h-px w-3 bg-[#888]" />
        </button>
        <button type="button" aria-label="Maximize" className="flex w-[58px] justify-center">
          <span className="h-3 w-3 border border-[#888]" />
        </button>
        <button type="button" aria-label="Close" className="flex w-[58px] justify-center">
          <svg width="13" height="13" viewBox="0 0 13 13" stroke="#888" aria-hidden="true">
            <path d="M0.500 0.500 12.500 12.500M12.500 0.500 0.500 12.500" />
          </svg>
        </button>
      </div>
      <nav className="flex h-[22px] items-center gap-[14px] pl-1 text-[#6d6d6d]">
        {menus.map((menu) => (
          <button key={menu} type="button">
            {menu}
          </button>
        ))}
      </nav>
    </header>
  );
}

function StatusBar() {
  return (
    <footer className="flex h-[27px] items-center border-t border-[#d7d7d7] pt-px pl-[6px] whitespace-pre">
      <span className="w-20 shrink-0 border-l border-[#d7d7d7] pl-1">Z 0.59</span>
      <span className="w-[218px] shrink-0 border-l border-[#d7d7d7] pl-1">
        {"X 266.700000  Y 53.340000"}
      </span>
      <span className="w-[335px] shrink-0 border-l border-[#d7d7d7] pl-1">
        {"dx 266.700000  dy 53.340000  dist 271.982"}
      </span>
      <span className="min-w-0 flex-1 border-l border-[#d7d7d7] pl-1">
        {"grid X 1.270000  Y 1.270000"}
      </span>
      <span className="w-[60px] shrink-0 border-l border-[#d7d7d7] pl-1">mm</span>
      <span className="flex w-6 shrink-0 justify-end self-stretch border-l border-[#d7d7d7] pr-[2px]">
        <svg width="11" height="11" viewBox="0 0 11 11" fill="#bdbdbd" className="self-end" aria-hidden="true">
          <path d="M8 0h3v3h-3zM4 4h3v3h-3zM8 4h3v3h-3zM0 8h3v3h-3zM4 8h3v3h-3zM8 8h3v3h-3z" />
        </svg>
      </span>
    </footer>
  );
}

function BackgroundEdge() {
  return (
    <div className="flex w-4 shrink-0 flex-col overflow-hidden bg-white" aria-hidden="true">
      <div className="mt-px h-[42px] bg-[#e3e6ea]" />
      <div className="mt-1 h-[35px] bg-[#f2f2f5]" />
      <div className="mt-[6px] h-[22px] bg-[#2a2a63]" />
      <div className="mt-2 h-5 text-[13px] leading-5 text-[#a0a0a0]">\we</div>
      <div className="mt-8 h-[38px] bg-[#efefef]">
        <svg width="16" height="38" fill="none" stroke="#333">
          <path d="M0 16Q2 20 0 25" strokeWidth="2" />
          <path d="M0 26 5 32" strokeWidth="3" />
        </svg>
      </div>
      <svg width="16" height="270" fill="none" className="mt-auto mb-[383px]">
        <path d="M15 92V83L18 88" stroke="#178080" strokeWidth="1.500" />
        <path d="M12.500 183V263M0 223.500H16" stroke="#222" />
      </svg>
    </div>
  );
}

export default function App() {
  return (
    <div className="flex min-h-screen flex-col bg-white font-['Open_Sans','Noto_Sans',sans-serif] text-[14px] leading-5 text-[#1c1c1c]">
      <div className="flex flex-1">
        <div className="relative flex min-w-0 flex-1 flex-col border-r border-[#9a9a9a] bg-[#f0f0f0] shadow-[0_0_12px_rgba(0,0,0,0.45)]">
          <div className="border-b border-[#9a9a9a] pt-px" />
          <TitleBar />

          <div className="flex h-10 items-center pr-[30px] pl-px">
            <HorizontalTools tools={mainTools} />
            <Combo label="Active layer" value="F.Cu (PgUp)" className="mx-px h-[26px] w-[141px]">
              <span className="pointer-events-none absolute top-[5px] left-[7px] h-[15px] w-[14px] border border-black bg-[#840000]" />
            </Combo>
            <HorizontalTools tools={sideTools} />
          </div>

          <div className="flex h-[34px] items-center pb-[3px] pl-[2px]">
            <Combo label="Track width" value="Track: 0.250 mm (9.84 mils) *" className="h-7 w-[219px]" />
            <Combo
              label="Via size"
              value="Via: 0.80 / 0.40 mm (31.5 / 15.7 mils) *"
              className="ml-[2px] h-7 w-[279px]"
            />
            <span className="ml-[6px] h-6 w-px bg-[#b4b4b4]" />
            <button type="button" aria-label="Use track width" className="mx-[7px]">
              <Icon>
                <path d="M0 9.500H26" stroke="#e01616" strokeWidth="2.600" />
                <path d="M13 0V4L11 8" stroke="#e01616" strokeWidth="2.200" />
                <path d="M0 14.500H26" stroke="#0b9a16" strokeWidth="4" />
                <path d="M17 15 13 20V26" stroke="#0b9a16" strokeWidth="4" />
                <path d="M1 3.500H8M18 3.500H25M1 22.500H7M19 22.500H25" stroke="#333" />
                <path d="M11 3.500 6 1V6ZM15 3.500 20 1V6ZM10 22.500 5 20V25ZM16 22.500 21 20V25Z" fill="#222" />
              </Icon>
            </button>
            <span className="h-6 w-px bg-[#b4b4b4]" />
            <Combo label="Grid" value="Grid: 1.2700 mm (50.00 mils)" className="ml-[5px] h-7 w-[251px]" />
            <span className="mx-[5px] h-6 w-px bg-[#b4b4b4]" />
            <Combo label="Zoom" value="Zoom Auto" className="h-7 w-[126px]" />
          </div>

          <div className="flex flex-1">
            <VerticalTools tools={leftTools} className="mr-[3px] w-[31px] items-center" />
            <Canvas />
            <VerticalTools
              tools={rightTools}
              className="w-[40px] border-r-4 border-[#dcdcdc]"
            />
            <LayersManager />
          </div>

          <dl className="flex h-10 gap-[38px] pl-[10px]">
            {stats.map((name) => (
              <div key={name}>
                <dt>{name}</dt>
                <dd>0</dd>
              </div>
            ))}
          </dl>
          <StatusBar />
          <div className="border-b border-[#9a9a9a]" />
        </div>
        <BackgroundEdge />
      </div>
      <div className="flex h-[14px] pl-[242px]" aria-hidden="true">
        <span className="w-[17px] bg-[#c4c4c4]" />
        <span className="ml-[213px] w-[13px] border-x border-[#b0b0b0]" />
        <span className="flex-1 bg-[#fafafa]" />
      </div>
    </div>
  );
}
